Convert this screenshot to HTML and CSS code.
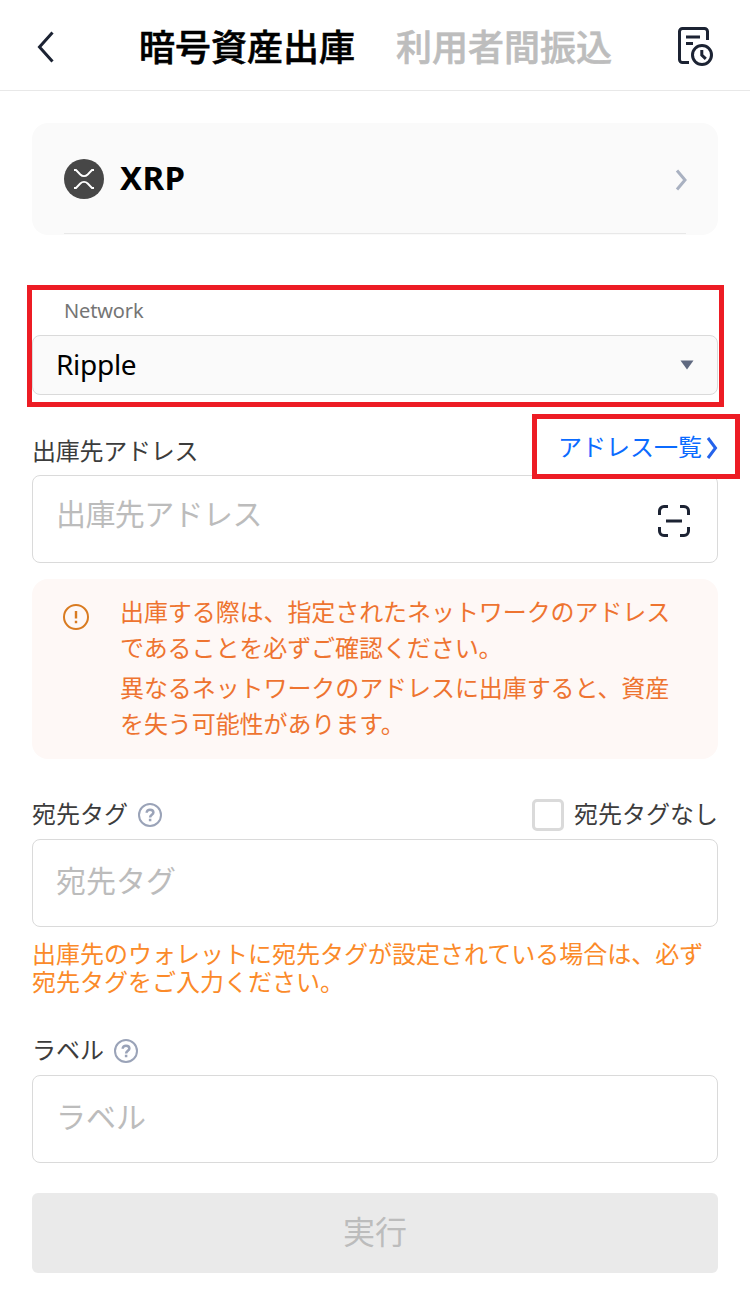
FILE: index.html
```html
<!DOCTYPE html>
<html lang="ja">
<head>
<meta charset="utf-8">
<title>暗号資産出庫</title>
<link rel="stylesheet" href="styles.css">
</head>
<body>
<header class="header">
  <svg class="back" width="20" height="36" viewBox="0 0 20 36" fill="none" stroke="#1c2333" stroke-width="3"><path d="M16.5 3.5 3.5 18l13 14.500"/></svg>
  <nav class="tabs">
    <span class="tab tab-active">暗号資産出庫</span>
    <span class="tab">利用者間振込</span>
  </nav>
  <svg class="history" width="36" height="40" viewBox="0 0 36 40" fill="none" stroke="#1c2333" stroke-width="3"><path d="M30.500 14V5.500a3 3 0 0 0-3-3h-22a3 3 0 0 0-3 3v28a3 3 0 0 0 3 3H12"/><path d="M9 11h14M9 17.500h7"/><circle cx="25" cy="29" r="9.500"/><path d="M24.800 24v5l4 3.800"/></svg>
</header>
<main class="content">
  <section class="coin">
    <div class="coin-row">
      <svg width="40" height="40" viewBox="0 0 40 40" fill="none"><circle cx="20" cy="20" r="20" fill="#474747"/><path d="M10 11h2l4.300 4.500c2.200 2.200 5.200 2.200 7.400 0L28 11h2M10 29h2l4.300-4.500c2.200-2.200 5.200-2.200 7.400 0L28 29h2" stroke="#fff" stroke-width="1.900"/></svg>
      <span class="coin-name">XRP</span>
      <svg class="coin-arrow" width="12" height="24" viewBox="0 0 12 24" fill="none" stroke="#a9b1c1" stroke-width="3"><path d="m2 2.500 8 9.500-8 9.500"/></svg>
    </div>
  </section>

  <section class="network">
    <div class="network-label">Network</div>
    <div class="select">
      <span class="select-value">Ripple</span>
      <svg width="14" height="10" viewBox="0 0 14 10"><path d="M.5.500h13L7 9.500z" fill="#5f6980"/></svg>
    </div>
    <div class="mark mark-network"></div>
  </section>

  <section class="address">
    <div class="label-row">
      <span class="label address-label">出庫先アドレス</span>
      <a class="list-link"><span class="list-text">アドレス一覧</span><svg width="12" height="24" viewBox="0 0 12 24" fill="none" stroke="#2563eb" stroke-width="3"><path d="m2 2 7.500 10L2 22"/></svg></a>
    </div>
    <div class="field">
      <span class="placeholder address-placeholder">出庫先アドレス</span>
      <svg class="scan" width="32" height="32" viewBox="0 0 32 32" fill="none" stroke="#1c2333" stroke-width="3"><path d="M1.500 10V6A4.500 4.500 0 0 1 6 1.500h4M22 1.500h4A4.500 4.500 0 0 1 30.500 6v4M30.500 22v4a4.500 4.500 0 0 1-4.500 4.500h-4M10 30.500H6A4.500 4.500 0 0 1 1.500 26v-4M8 16h16"/></svg>
    </div>
    <div class="mark mark-list"></div>
  </section>

  <section class="warning">
    <svg class="warning-icon" width="26" height="26" viewBox="0 0 26 26" fill="none" stroke="#d97b20"><circle cx="13" cy="13" r="12" stroke-width="2"/><path d="M13 7v7.500M13 16.800v2.400" stroke-width="2.400"/></svg>
    <div class="warning-text">
      <p>出庫する際は、指定されたネットワークのアドレスであることを必ずご確認ください。</p>
      <p>異なるネットワークのアドレスに出庫すると、資産を失う可能性があります。</p>
    </div>
  </section>

  <section class="tag">
    <div class="label-row">
      <span class="label">宛先タグ</span>
      <svg class="help" width="24" height="24" viewBox="0 0 24 24" fill="none" stroke="#9aa3b8" stroke-width="2"><circle cx="12" cy="12" r="11"/><path d="M8.700 9.800c0-2 1.400-3.100 3.300-3.100s3.400 1.100 3.400 2.800c0 2.300-3.300 2.300-3.300 5M12.100 15.800v2.400" stroke-width="2.500"/></svg>
      <span class="checkbox"></span>
      <span class="check-label">宛先タグなし</span>
    </div>
    <div class="field"><span class="placeholder">宛先タグ</span></div>
    <p class="hint">出庫先のウォレットに宛先タグが設定されている場合は、必ず宛先タグをご入力ください。</p>
  </section>

  <section class="memo">
    <div class="label-row">
      <span class="label">ラベル</span>
      <svg class="help" width="24" height="24" viewBox="0 0 24 24" fill="none" stroke="#9aa3b8" stroke-width="2"><circle cx="12" cy="12" r="11"/><path d="M8.700 9.800c0-2 1.400-3.100 3.300-3.100s3.400 1.100 3.400 2.800c0 2.300-3.300 2.300-3.300 5M12.100 15.800v2.400" stroke-width="2.500"/></svg>
    </div>
    <div class="field"><span class="placeholder">ラベル</span></div>
  </section>

  <button class="submit" disabled>実行</button>
</main>
</body>
</html>
```
FILE: styles.css
```css
* { box-sizing: border-box; }
body {
  margin: 0;
  background: #fff;
  color: #000;
  font-family: "Noto Sans", "Noto Sans CJK JP", sans-serif;
}
p { margin: 0; }
svg { display: block; flex: none; }

.header {
  display: flex;
  align-items: center;
  height: 91px;
  padding: 2px 37px 0 36px;
  border-bottom: 1px solid #e8e8e8;
}
.back { margin-top: 2px; }
.tabs { display: flex; gap: 41px; margin-left: 83px; padding-bottom: 3px; }
.tab {
  font: 500 36px/54px "Noto Sans CJK JP", sans-serif;
  -webkit-text-stroke: 0.6px currentColor;
  color: #bdbdbd;
  white-space: nowrap;
}
.tab-active { color: #000; }
.history { margin-left: auto; }

.content { padding: 32px 32px 0; }

.coin {
  height: 112px;
  padding: 0 32px;
  border-radius: 16px;
  background: #fafafa;
}
.coin-row {
  display: flex;
  align-items: center;
  height: 111px;
  padding-top: 2px;
  border-bottom: 1px solid #e8e8e8;
}
.coin-name {
  margin-left: 16px;
  padding-bottom: 2px;
  font-size: 33px;
  font-weight: 700;
  line-height: 44px;
  letter-spacing: 0.4px;
}
.coin-arrow { margin: 2px -1px 0 auto; }

.network { position: relative; margin-top: 60px; }
.network-label {
  height: 40px;
  padding-left: 32px;
  font-size: 20px;
  line-height: 32px;
  letter-spacing: -0.15px;
  color: #757575;
}
.select {
  display: flex;
  align-items: center;
  justify-content: space-between;
  height: 60px;
  padding: 0 23px;
  border: 1px solid #dadada;
  border-radius: 8px;
  background: #fafafa;
  font-size: 28px;
}
.select-value { padding-bottom: 2px; letter-spacing: -0.3px; }

/* Highlight frames drawn over the form */
.mark { position: absolute; border: 5px solid #ed1c24; pointer-events: none; }
.mark-network { top: -10px; left: -5px; right: -6px; height: 122px; }
.mark-list { top: -15px; right: -22px; width: 208px; height: 65px; }

.label-row { display: flex; align-items: center; height: 46px; }
.label { padding-bottom: 2px; font-size: 24px; color: #3c3c3c; line-height: 36px; }
.address-label { letter-spacing: -0.25px; }
.help { margin-left: 10px; }

.field {
  display: flex;
  align-items: center;
  justify-content: space-between;
  height: 88px;
  padding: 0 27px 0 23px;
  border: 1px solid #dadada;
  border-radius: 8px;
  background: #fff;
}
.placeholder { font-size: 30px; line-height: 44px; color: #bcbcbc; padding-bottom: 4px; }
.address-placeholder { padding-bottom: 11px; letter-spacing: -0.6px; }
.scan { margin-top: 4px; }

.address { position: relative; margin-top: 34px; }
.list-link {
  display: flex;
  align-items: center;
  gap: 4px;
  margin: 0 0 8px auto;
  font-size: 24px;
  line-height: 36px;
  color: #0b6bff;
}
.list-text { padding-bottom: 3px; }

.warning {
  display: flex;
  align-items: flex-start;
  height: 180px;
  margin-top: 16px;
  padding: 15px 31px;
  border-radius: 16px;
  background: #fef8f6;
}
.warning-icon { margin: 10px 31px 0 0; }
.warning-text {
  display: grid;
  gap: 4px;
  width: 558px;
  flex: none;
  font-size: 24px;
  line-height: 36px;
  letter-spacing: -0.08px;
  color: #ee7430;
}

.tag { margin-top: 33px; }
.tag .label-row, .memo .label-row { height: 47px; padding-bottom: 1px; }
.checkbox {
  width: 32px;
  height: 32px;
  margin-left: auto;
  border: 3px solid #dadada;
  border-radius: 5px;
}
.check-label {
  margin-left: 10px;
  padding-bottom: 2px;
  font-size: 24px;
  line-height: 36px;
  color: #3c3c3c;
}
.hint { margin-top: 13px; font-size: 24px; line-height: 28px; color: #fb8a29; }

.memo { margin-top: 32px; }

.submit {
  display: block;
  width: 100%;
  height: 80px;
  margin-top: 30px;
  padding: 0 0 6px;
  border: 0;
  border-radius: 6px;
  background: #eaeaea;
  color: #bcbcbc;
  font: 400 32px/48px "Noto Sans CJK JP", sans-serif;
}
```
